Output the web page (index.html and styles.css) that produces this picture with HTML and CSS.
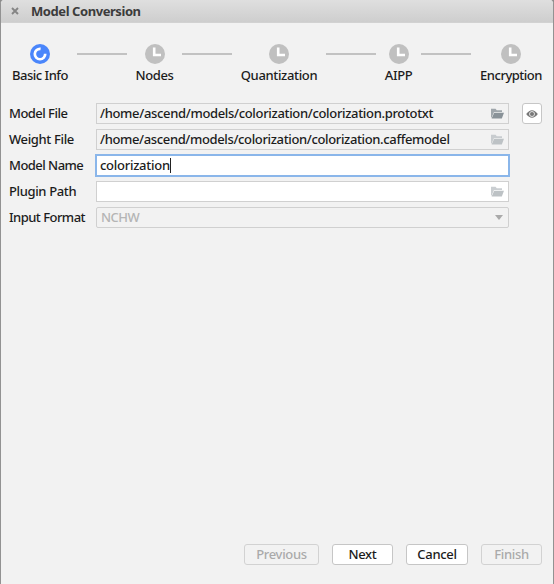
FILE: index.html
```html
<!DOCTYPE html>
<html lang="en">
<head>
<meta charset="utf-8">
<title>Model Conversion</title>
<link rel="stylesheet" href="styles.css">
</head>
<body>
<svg class="defs" width="0" height="0">
  <symbol id="clock" viewBox="0 0 20 20"><circle cx="10" cy="10" r="10" fill="#c0c0c0"/><path d="M9.2 3.6V11H16" fill="none" stroke="#fff" stroke-width="2.6"/></symbol>
  <symbol id="folder" viewBox="0 0 13 11"><path d="M0 9.5V.8h4.5l1.3 1.5H11V4H3L.7 9.5z" fill="currentColor" opacity=".8"/><path d="M3.2 4.8H13l-2.2 5.6H.6z" fill="currentColor"/></symbol>
</svg>
<div class="window">
  <header class="titlebar">
    <svg class="close" viewBox="0 0 8 8"><path d="M1 1l6 6M7 1L1 7" stroke="#858585" stroke-width="1.9"/></svg>
    <h1>Model Conversion</h1>
  </header>
  <nav class="steps">
    <div class="step s-basic"><svg viewBox="0 0 20 20"><circle cx="10" cy="10" r="10" fill="#4a86fb"/><path d="M10.6 4.9A5.2 5.2 0 1 0 15.2 9.8" fill="none" stroke="#fff" stroke-width="2.7"/></svg><span>Basic Info</span></div>
    <i></i>
    <div class="step s-nodes"><svg><use href="#clock"/></svg><span>Nodes</span></div>
    <i></i>
    <div class="step s-quant"><svg><use href="#clock"/></svg><span>Quantization</span></div>
    <i></i>
    <div class="step s-aipp"><svg><use href="#clock"/></svg><span>AIPP</span></div>
    <i></i>
    <div class="step s-enc"><svg><use href="#clock"/></svg><span>Encryption</span></div>
  </nav>
  <main class="form">
    <div class="row"><label class="tight">Model File</label><div class="field"><span class="v-proto">/home/ascend/models/colorization/colorization.prototxt</span><svg class="folder dark"><use href="#folder"/></svg></div>
      <button class="eye"><svg viewBox="0 0 12 8"><path d="M.2 4Q3 .2 6 .2T11.8 4Q9 7.8 6 7.8T.2 4z" fill="#777"/><circle cx="6" cy="4" r="2.5" fill="none" stroke="#eee" stroke-width=".9"/></svg></button></div>
    <div class="row"><label>Weight File</label><div class="field"><span class="v-caffe">/home/ascend/models/colorization/colorization.caffemodel</span><svg class="folder"><use href="#folder"/></svg></div></div>
    <div class="row"><label class="tight">Model Name</label><div class="field focus"><span class="v-name">colorization</span><b class="caret"></b></div></div>
    <div class="row"><label>Plugin Path</label><div class="field white"><svg class="folder"><use href="#folder"/></svg></div></div>
    <div class="row"><label class="tight">Input Format</label><div class="field select"><span class="v-nchw">NCHW</span><svg class="arrow" viewBox="0 0 8 5"><path d="M0 0h8L4 5z" fill="#aaa"/></svg></div></div>
  </main>
  <footer class="actions">
    <button class="prev" disabled>Previous</button>
    <button class="next">Next</button>
    <button class="cancel">Cancel</button>
    <button class="finish" disabled>Finish</button>
  </footer>
</div>
</body>
</html>
```
FILE: styles.css
```css
* { box-sizing: border-box; }
body { margin: 0; background: #8c8c8c; font: 500 13px/18px "Noto Sans", "Open Sans", sans-serif; color: #1c1c1c; }
.defs { position: absolute; }
.window { width: 554px; height: 584px; display: flex; flex-direction: column; background: #f2f2f2; border-left: 1px solid #929292; border-right: 1px solid #929292; border-radius: 4px 4px 0 0; overflow: hidden; }
.titlebar { height: 23px; flex: none; display: flex; align-items: center; padding-left: 10px; background: linear-gradient(#dfdfdf, #cecece); border-bottom: 1px solid #d2d2d2; }
.close { width: 8px; height: 8px; margin-right: 12px; }
h1 { margin: 0; font-size: 13px; line-height: 18px; font-weight: 700; letter-spacing: -0.43px; color: #3c3c3c; white-space: nowrap; }
.steps { display: flex; padding: 21px 11px 0; height: 80px; flex: none; }
.steps i { flex: 1; height: 2px; margin: 9px 9px 0; background: #c2c2c2; }
.step { display: flex; flex-direction: column; align-items: center; white-space: nowrap; letter-spacing: -0.35px; }
.step svg { width: 20px; height: 20px; margin-bottom: 2px; flex: none; }
.s-basic { width: 56px; letter-spacing: -0.5px; }
.s-nodes { width: 37px; }
.s-quant { width: 76px; }
.s-aipp { width: 27px; }
.s-enc { width: 62px; letter-spacing: -0.5px; }
.form { flex: 1; display: flex; flex-direction: column; gap: 5px; padding-left: 8px; }
.row { display: flex; height: 21px; align-items: center; white-space: nowrap; }
.row label { width: 87px; flex: none; padding-bottom: 2px; letter-spacing: -0.36px; }
.row .tight { letter-spacing: -0.53px; }
.field { width: 413px; height: 21px; display: flex; align-items: center; padding: 0 4px 0 3px; border: 1px solid #d0d0d0; }
.field span { padding-bottom: 2px; }
.v-proto { letter-spacing: -0.33px; }
.v-caffe { letter-spacing: -0.36px; }
.v-name { letter-spacing: -0.27px; }
.v-nchw { letter-spacing: -0.5px; }
.focus { background: #fff; border-color: #8ab6ea; box-shadow: 0 0 0 1px #8ab6ea; }
.white { background: #fff; }
.select { border-radius: 2px; padding-left: 4px; color: #b5b5b5; }
.caret { width: 1px; height: 15px; background: #222; }
.folder { width: 13px; height: 11px; margin-left: auto; color: #bdc2c5; }
.dark { color: #899298; }
.arrow { width: 8px; height: 5px; margin: 0 1px 0 auto; }
button { font: inherit; letter-spacing: -0.3px; color: #1c1c1c; padding: 0 0 2px; display: flex; align-items: center; justify-content: center; background: #fff; border: 1px solid #c6c6c6; border-radius: 3px; height: 21px; }
button:disabled { background: #f2f2f2; border-color: #d2d2d2; color: #aaa; }
.eye { width: 20px; margin-left: 13px; padding: 0; }
.eye svg { width: 12px; height: 8px; }
.actions { display: flex; justify-content: flex-end; gap: 13px; padding: 0 11px 19px 0; }
.prev { width: 75px; }
.next { width: 61px; }
.cancel { width: 62px; }
.finish { width: 61px; }
```
